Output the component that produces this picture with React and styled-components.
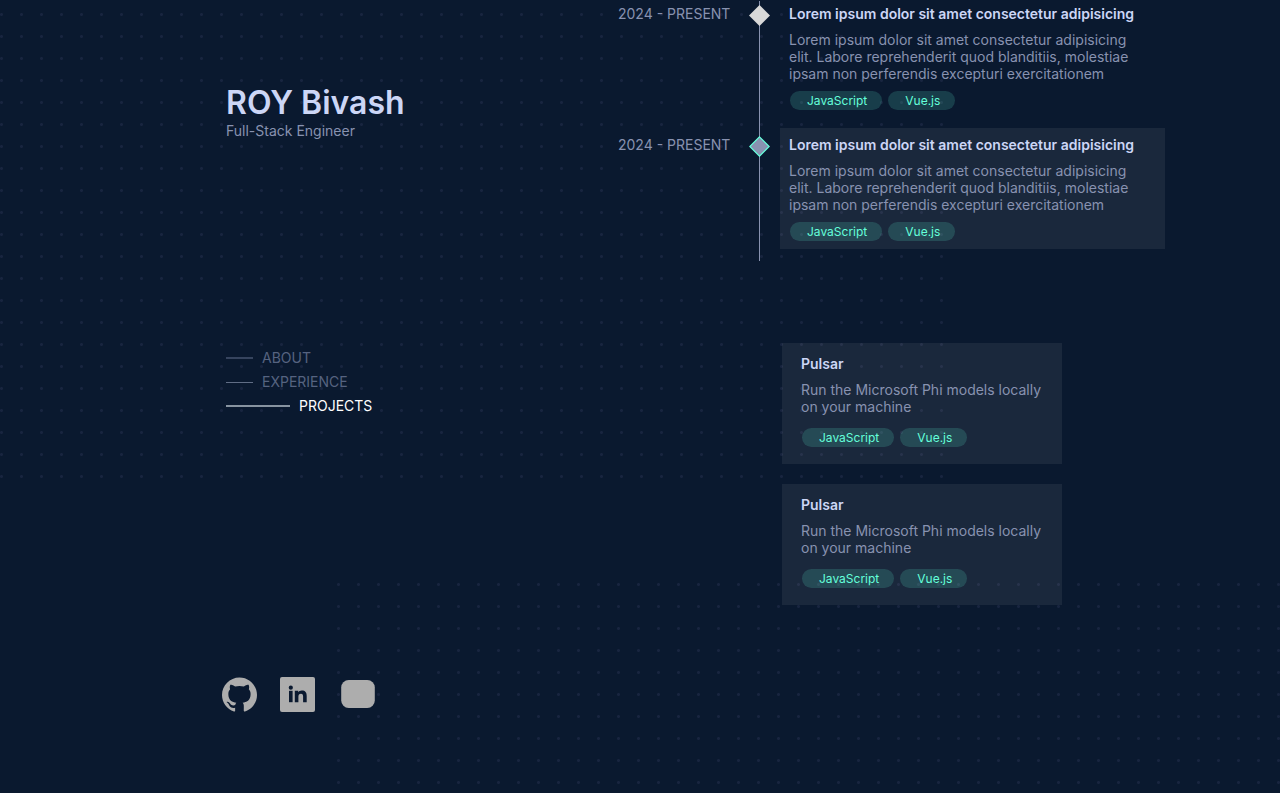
import React from "react";
import styled, { createGlobalStyle, css } from "styled-components";
import { SiGithub } from "react-icons/si";

const GlobalStyle = createGlobalStyle`
  *, *::before, *::after { box-sizing: border-box; }
  body {
    margin: 0;
    background: #0a192f;
    color: #8892b0;
    font-family: Inter, "Liberation Sans", sans-serif;
    font-size: 14px;
    line-height: 17px;
    -webkit-font-smoothing: antialiased;
  }
  h1, h2, p, ul, ol { margin: 0; padding: 0; }
  ul, ol { list-style: none; }
  a { color: inherit; text-decoration: none; }
`;

const Page = styled.div`
  position: relative;
  isolation: isolate;
  overflow: hidden;
  min-height: 100vh;
  display: grid;
  grid-template-columns: 396px minmax(0, 1fr);
  padding: 0 9% 0 222px;
`;

const Dots = styled.div`
  position: absolute;
  z-index: -1;
  background-image: radial-gradient(circle at 1.5px 1.5px, #18253f 1px, transparent 2px);
  background-size: 20px 22px;
  ${(p) =>
    p.$corner === "top"
      ? css`top: 13px; left: 0; width: 943px; height: 466px;`
      : css`top: 583px; left: 337px; right: 0; bottom: 0;`}
`;

const Sidebar = styled.header`
  display: flex;
  flex-direction: column;
  min-height: 100vh;
  padding: 83px 0 81px;
`;

const Intro = styled.div`
  padding-left: 4px;
`;

const Name = styled.h1`
  color: #ccd6f6;
  font-size: 32px;
  font-weight: 600;
  line-height: 39px;
`;

const Nav = styled.nav`
  margin-top: 207px;
  padding-left: 4px;
`;

const NavLink = styled.a`
  display: flex;
  align-items: center;
  gap: 9px;
  height: 24px;
  line-height: 16px;
  color: ${(p) => (p.$active ? "#ffffff" : "#566380")};

  &::before {
    content: "";
    width: ${(p) => (p.$active ? "64px" : "27px")};
    height: ${(p) => (p.$thin ? "1px" : "2px")};
    background: ${(p) => (p.$active ? "#8793a0" : p.$thin ? "#606d85" : "#36445e")};
  }
`;

const Socials = styled.ul`
  display: flex;
  align-items: center;
  gap: 23px;
  margin-top: auto;
  color: #adadad;
`;

const SocialLink = styled.a`
  display: flex;
  align-items: center;
  justify-content: center;
  min-width: 35px;
  height: 35px;
`;

const Content = styled.main`
  min-width: 0;
`;

const Timeline = styled.ol`
  position: relative;
  display: grid;
  gap: 10px;
  margin-top: -3px;
  padding-bottom: 12px;

  &::before {
    content: "";
    position: absolute;
    top: 4px;
    bottom: 0;
    left: 141px;
    width: 1px;
    background: #8892b0;
  }
`;

const Entry = styled.li`
  position: relative;
  display: grid;
  grid-template-columns: 121px 41px minmax(0, 1fr);
`;

const Period = styled.span`
  padding-top: 8px;
`;

const Marker = styled.span`
  display: flex;
  justify-content: center;
  padding-top: 8px;
`;

const EntryCard = styled.article`
  padding: 8px 9px;
  background: ${(p) => (p.$active ? "rgba(217, 217, 217, 0.08)" : "transparent")};
`;

const CardTitle = styled.h2`
  color: #ccd6f6;
  font-size: 14px;
  font-weight: 600;
  line-height: 17px;
`;

const CardText = styled.p`
  max-width: 350px;
  margin-top: 9px;
`;

const Tags = styled.ul`
  display: flex;
  gap: 6px;
  margin-top: ${(p) => (p.$roomy ? "13px" : "9px")};
  padding-left: 1px;
`;

const Tag = styled.li`
  padding: 0 15px 0 17px;
  border-radius: 10px;
  background: rgba(100, 255, 218, 0.16);
  color: #64ffda;
  font-size: 12px;
  line-height: 19px;
`;

const Projects = styled.section`
  display: grid;
  gap: 20px;
  margin-top: 82px;
  padding-left: 164px;
`;

const ProjectCard = styled.article`
  width: 280px;
  padding: 12px 19px 17px;
  background: rgba(217, 217, 217, 0.08);
`;

const navItems = [
  { label: "ABOUT", href: "#about" },
  { label: "EXPERIENCE", href: "#experience", thin: true },
  { label: "PROJECTS", href: "#projects", active: true },
];

const summary =
  "Lorem ipsum dolor sit amet consectetur adipisicing elit. Labore reprehenderit quod blanditiis, molestiae ipsam non perferendis excepturi exercitationem";

const jobs = [
  { id: 1, active: false },
  { id: 2, active: true },
];

const skills = ["JavaScript", "Vue.js"];

function Diamond({ active }) {
  return (
    <svg width="21" height="21" viewBox="0 0 21 21" aria-hidden="true">
      {active ? (
        <path d="M10.5 .8 20.2 10.5 10.5 20.2 .8 10.5Z" fill="#8892b0" stroke="#64ffda" strokeWidth="1.2" />
      ) : (
        <path d="M10.5 0 21 10.5 10.5 21 0 10.5Z" fill="#d9d9d9" />
      )}
    </svg>
  );
}

function LinkedInIcon() {
  return (
    <svg width="35" height="35" viewBox="0 0 35 35" aria-hidden="true">
      <rect width="35" height="35" rx="2" fill="currentColor" />
      <g fill="#0a192f">
        <circle cx="10.8" cy="10.7" r="2.1" />
        <path d="M9 13.8h3.6v11.4H9z" />
        <path d="M14.8 13.8h3.4v1.5c.6-1.1 1.9-1.8 3.6-1.8 3.5 0 4.9 1.9 4.9 5.4v6.3h-3.6v-5.6c0-1.7-.5-2.8-2.1-2.8-1.9 0-2.6 1.3-2.6 3v5.4h-3.6z" />
      </g>
    </svg>
  );
}

function BlankIcon() {
  return (
    <svg width="40" height="35" viewBox="0 0 40 35" aria-hidden="true">
      <rect x="3.2" y="3" width="33.6" height="28" rx="7.5" fill="currentColor" />
    </svg>
  );
}

function TagList({ roomy }) {
  return (
    <Tags $roomy={roomy}>
      {skills.map((skill) => (
        <Tag key={skill}>{skill}</Tag>
      ))}
    </Tags>
  );
}

export default function App() {
  return (
    <>
      <GlobalStyle />
      <Page>
        <Dots $corner="top" />
        <Dots $corner="bottom" />

        <Sidebar>
          <Intro>
            <Name>ROY Bivash</Name>
            <p>Full-Stack Engineer</p>
          </Intro>
          <Nav>
            {navItems.map((item) => (
              <NavLink key={item.label} href={item.href} $active={item.active} $thin={item.thin}>
                {item.label}
              </NavLink>
            ))}
          </Nav>
          <Socials>
            <li>
              <SocialLink href="#github" aria-label="GitHub">
                <SiGithub size={35} />
              </SocialLink>
            </li>
            <li>
              <SocialLink href="#linkedin" aria-label="LinkedIn">
                <LinkedInIcon />
              </SocialLink>
            </li>
            <li>
              <SocialLink href="#video" aria-label="Videos">
                <BlankIcon />
              </SocialLink>
            </li>
          </Socials>
        </Sidebar>

        <Content>
          <Timeline id="experience">
            {jobs.map((job) => (
              <Entry key={job.id}>
                <Period>2024 - PRESENT</Period>
                <Marker>
                  <Diamond active={job.active} />
                </Marker>
                <EntryCard $active={job.active}>
                  <CardTitle>Lorem ipsum dolor sit amet consectetur adipisicing</CardTitle>
                  <CardText>{summary}</CardText>
                  <TagList />
                </EntryCard>
              </Entry>
            ))}
          </Timeline>

          <Projects id="projects">
            {[1, 2].map((id) => (
              <ProjectCard key={id}>
                <CardTitle>Pulsar</CardTitle>
                <CardText>Run the Microsoft Phi models locally on your machine</CardText>
                <TagList roomy />
              </ProjectCard>
            ))}
          </Projects>
        </Content>
      </Page>
    </>
  );
}
